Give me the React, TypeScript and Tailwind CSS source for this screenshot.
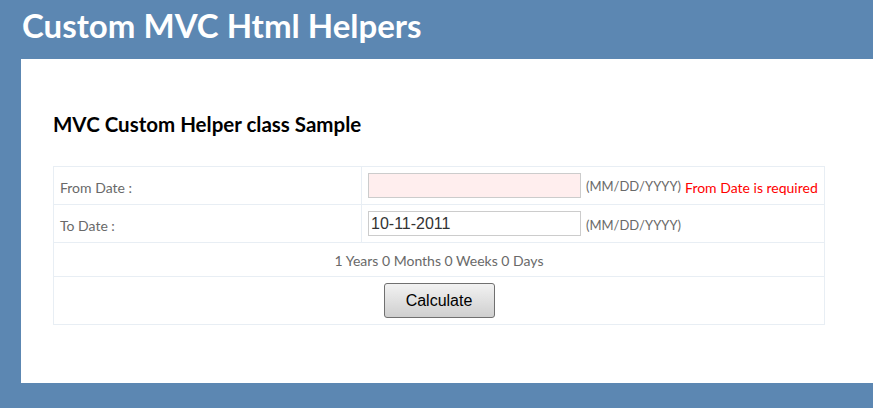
const font = { fontFamily: '"Lato", "Open Sans", sans-serif' };

export default function App() {
  return (
    <div className="w-[873px] h-[408px] bg-[#5c87b2] overflow-hidden" style={font}>
      <div className="h-[59px] pl-[22px] pt-[5px]">
        <h1 className="text-[33px] leading-[40px] font-bold text-white">Custom MVC Html Helpers</h1>
      </div>
      <div className="ml-[21px] h-[324px] bg-white pl-[32px] pr-[27px] pt-[52px]">
        <h2 className="text-[20.5px] leading-[26px] font-bold text-black">MVC Custom Helper class Sample</h2>
        <table className="mt-[29px] w-[772px] border-collapse text-[14px] text-[#696969]">
          <tbody>
            <tr className="h-[38px]">
              <td className="w-[308px] border border-[#e8eef4] pl-[6px] pt-[3px]">From Date :</td>
              <td className="border border-[#e8eef4] pl-[6px]">
                <div className="flex items-center">
                  <input className="w-[213px] h-[25px] border border-[#cccccc] bg-[#ffeeee] outline-none" />
                  <span className="ml-[5px] mt-[3px] text-[13px]">(MM/DD/YYYY)</span>
                  <span className="ml-[4px] mt-[3px] text-[#ff0000]">From Date is required</span>
                </div>
              </td>
            </tr>
            <tr className="h-[38px]">
              <td className="border border-[#e8eef4] pl-[6px] pt-[3px]">To Date :</td>
              <td className="border border-[#e8eef4] pl-[6px]">
                <div className="flex items-center">
                  <input
                    defaultValue="10-11-2011"
                    className="w-[213px] h-[25px] border border-[#cccccc] bg-white px-[2px] text-[16px] text-[#333] outline-none"
                    style={{ fontFamily: '"Liberation Sans", Arial, sans-serif' }}
                  />
                  <span className="ml-[5px] mt-[5px] text-[13px]">(MM/DD/YYYY)</span>
                </div>
              </td>
            </tr>
            <tr className="h-[34px]">
              <td colSpan={2} className="border border-[#e8eef4] text-center pt-[2px]">
                1 Years 0 Months 0 Weeks 0 Days
              </td>
            </tr>
            <tr className="h-[48px]">
              <td colSpan={2} className="border border-[#e8eef4] text-center">
                <button
                  className="w-[111px] h-[35px] rounded-[3px] border border-[#707070] bg-gradient-to-b from-[#f2f2f2] to-[#cfcfcf] text-[16px] text-black"
                  style={{ fontFamily: '"Liberation Sans", Arial, sans-serif' }}
                >
                  Calculate
                </button>
              </td>
            </tr>
          </tbody>
        </table>
      </div>
    </div>
  );
}
